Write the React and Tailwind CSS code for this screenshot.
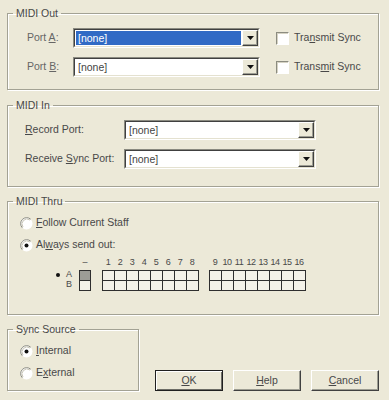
import React from "react";

const font = { fontFamily: '"Liberation Sans", Arial, sans-serif' };

function U({ children }) {
  return <span className="underline underline-offset-[1px]">{children}</span>;
}

function Group({ title, className, children }) {
  return (
    <fieldset className={`border border-[#a3a294] shadow-[inset_1px_1px_0_#fff,1px_1px_0_#fff] ${className}`}>
      <legend className="ml-[5px] px-[3px] leading-[12px] text-[#484848]">{title}</legend>
      {children}
    </fieldset>
  );
}

function Combo({ className, selected }) {
  return (
    <div className={`flex h-[20px] border border-[#8a8a80] border-r-white border-b-white ${className}`}>
      <div className="flex flex-1 border border-[#404040] border-r-[#e4e1d0] border-b-[#e4e1d0] bg-white">
        <div className="flex flex-1 p-[1px]">
          <div className={`flex-1 pl-[2px] leading-[15px] ${selected ? "bg-[#316ac5] text-white" : "text-[#444]"}`}>
            [none]
          </div>
        </div>
        <div className="flex w-[16px] items-center justify-center border border-white border-r-[#404040] border-b-[#404040] bg-[#ece9d8] shadow-[inset_-1px_-1px_0_#9d9d92]">
          <svg width="7" height="4" viewBox="0 0 7 4">
            <path d="M0 0h7L3.5 4z" fill="#111" />
          </svg>
        </div>
      </div>
    </div>
  );
}

function Check({ children }) {
  return (
    <div className="flex items-center gap-[5px]">
      <div className="h-[13px] w-[13px] border border-[#8c8c80] border-r-white border-b-white bg-white shadow-[inset_1px_1px_0_#d6d3c4]" />
      <span className="text-[#484848]">{children}</span>
    </div>
  );
}

function Radio({ checked, children }) {
  return (
    <div className="flex h-[16px] items-center gap-[3px]">
      <svg width="13" height="13" viewBox="0 0 13 13">
        <circle cx="6.5" cy="6.5" r="6" fill="#fff" />
        <path d="M2.26 10.74A6 6 0 0 1 10.74 2.26" stroke="#8a8a80" fill="none" />
        <path d="M3 10A5 5 0 0 1 10 3" stroke="#c8c5b6" fill="none" />
        {checked && <circle cx="6.5" cy="6.5" r="2" fill="#111" />}
      </svg>
      <span className="text-[#484848]">{children}</span>
    </div>
  );
}

function Cells({ count, filled }) {
  const cells = [];
  for (let r = 0; r < 2; r++) {
    for (let c = 0; c < count; c++) {
      cells.push(
        <div
          key={`${r}-${c}`}
          className={filled && r === 0 ? "bg-[#9c9c96]" : "bg-[#f3f1e8]"}
        />
      );
    }
  }
  return (
    <div
      className={`grid gap-px border border-[#2e2e2e] bg-[#2e2e2e] ${
        count === 1 ? "grid-cols-[10px] grid-rows-[9px_9px]" : "grid-cols-[repeat(8,11px)] grid-rows-[9px_9px]"
      }`}
    >
      {cells}
    </div>
  );
}

function ChannelGroup({ from }) {
  const nums = Array.from({ length: 8 }, (_, i) => from + i);
  return (
    <div className="flex flex-col">
      <div className="flex h-[13px] items-start">
        {nums.map((n) => (
          <span key={n} className="w-[12px] text-center text-[9px] leading-[11px] tracking-[-0.5px] text-[#484848]">
            {n}
          </span>
        ))}
      </div>
      <Cells count={8} />
    </div>
  );
}

function Btn({ children, isDefault }) {
  return (
    <button
      className={`h-[21px] w-[68px] bg-[#ece9d8] text-[#484848] ${
        isDefault
          ? "border border-[#202020] shadow-[inset_1px_1px_0_#fff,inset_-1px_-1px_0_#6d6d66]"
          : "border border-white border-r-[#404040] border-b-[#404040] shadow-[inset_-1px_-1px_0_#9d9d92]"
      }`}
    >
      {children}
    </button>
  );
}

export default function App() {
  return (
    <div style={font} className="flex h-[400px] w-[389px] flex-col bg-[#ece9d8] pt-[7px] pl-[7px] text-[10.5px]">
      <Group title="MIDI Out" className="h-[83px] w-[372px]">
        <div className="flex flex-col gap-[9px] pt-[9px] pl-[19px]">
          <div className="flex items-center">
            <span className="w-[46px] text-[#666]">
              Port <U>A</U>:
            </span>
            <Combo className="w-[187px]" selected />
            <div className="ml-[16px]">
              <Check>
                Tra<U>n</U>smit Sync
              </Check>
            </div>
          </div>
          <div className="flex items-center">
            <span className="w-[46px] text-[#666]">
              Port <U>B</U>:
            </span>
            <Combo className="w-[187px]" />
            <div className="ml-[16px]">
              <Check>
                Trans<U>m</U>it Sync
              </Check>
            </div>
          </div>
        </div>
      </Group>

      <Group title="MIDI In" className="mt-[9px] h-[88px] w-[372px]">
        <div className="flex flex-col gap-[9px] pt-[9px] pl-[17px]">
          <div className="flex items-center">
            <span className="w-[99px] text-[#484848]">
              <U>R</U>ecord Port:
            </span>
            <Combo className="w-[192px]" />
          </div>
          <div className="flex items-center">
            <span className="w-[99px] text-[#484848]">
              Receive <U>S</U>ync Port:
            </span>
            <Combo className="w-[192px]" />
          </div>
        </div>
      </Group>

      <Group title="MIDI Thru" className="mt-[8px] h-[120px] w-[372px]">
        <div className="flex flex-col pt-[8px] pl-[12px]">
          <Radio>
            <U>F</U>ollow Current Staff
          </Radio>
          <div className="mt-[6px]">
            <Radio checked>
              Al<U>w</U>ays send out:
            </Radio>
          </div>
          <div className="mt-[4px] ml-[32px] flex items-start">
            <div className="flex w-[27px] flex-col pt-[13px]">
              <div className="flex h-[10px] items-center text-[9px] text-[#484848]">
                <span className="flex w-[12px] justify-center">
                  <span className="h-[4px] w-[4px] rounded-full bg-[#111]" />
                </span>
                <span className="pl-[2px]">A</span>
              </div>
              <div className="flex h-[10px] items-center text-[9px] text-[#484848]">
                <span className="w-[12px]" />
                <span className="pl-[2px]">B</span>
              </div>
            </div>
            <div className="flex flex-col">
              <div className="h-[13px] text-center text-[9px] leading-[10px] text-[#484848]">–</div>
              <Cells count={1} filled />
            </div>
            <div className="ml-[11px]">
              <ChannelGroup from={1} />
            </div>
            <div className="ml-[10px]">
              <ChannelGroup from={9} />
            </div>
          </div>
        </div>
      </Group>

      <div className="mt-[8px] flex items-end">
        <Group title="Sync Source" className="h-[68px] w-[132px]">
          <div className="flex flex-col gap-[6px] pt-[8px] pl-[12px]">
            <Radio checked>
              <U>I</U>nternal
            </Radio>
            <Radio>
              E<U>x</U>ternal
            </Radio>
          </div>
        </Group>
        <div className="ml-[16px] flex gap-[10px]">
          <Btn isDefault>
            <U>O</U>K
          </Btn>
          <Btn>
            <U>H</U>elp
          </Btn>
          <Btn>
            <U>C</U>ancel
          </Btn>
        </div>
      </div>
    </div>
  );
}
